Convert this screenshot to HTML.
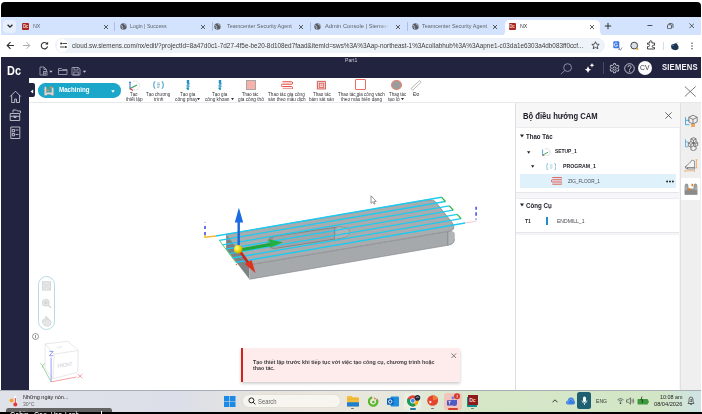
<!DOCTYPE html><html><head><meta charset="utf-8"><style>
*{margin:0;padding:0;box-sizing:border-box}
html,body{width:702px;height:414px;overflow:hidden;background:#fff;font-family:"Liberation Sans",sans-serif;position:relative}
.a{position:absolute}
.T{position:absolute;white-space:nowrap;line-height:1}
#top{left:1px;top:2px;width:699.6px;height:16px;background:#000;border-radius:4px 4px 0 0}
#tabs{left:1px;top:17px;width:699.6px;height:18px;background:#d3e3fd}
#tb{left:1px;top:35px;width:699.6px;height:22px;background:#fff}
#pill{left:55px;top:38.3px;width:550px;height:14.3px;background:#eef2f9;border-radius:8px}
#hdr{left:1.3px;top:56.7px;width:699.3px;height:21.6px;background:#22243f}
#side{left:1.3px;top:56.7px;width:28.1px;height:333px;background:#22243f}
#rib{left:29px;top:78.3px;width:671.6px;height:25.7px;background:#fff;border-bottom:2px solid #e9e9ed}
#vp{left:29px;top:103px;width:486px;height:287px;background:#fff}
#panel{left:515px;top:103px;width:165px;height:287px;background:#f6f6f8;border-left:1px solid #dedee6}
#rail{left:679.6px;top:103px;width:21px;height:287px;background:#efefef;border-left:1px solid #e0e0e0}
#task{left:0;top:390px;width:701px;height:22px;background:linear-gradient(90deg,#e0e2e9 0,#dcdfe9 180px,#e6e4dd 260px,#ebe6df 320px,#e6e8dc 400px,#d6e7c8 480px,#d2e6c6 660px,#cfe3e6 701px);border-top:1px solid #a9adb8}
#bot{left:0;top:412px;width:702px;height:2px;background:#000}
.fav{width:7px;height:7px;background:#a8281f;border-radius:1px;overflow:hidden}
.fav span{position:absolute;left:.6px;top:1.4px;font-size:4.5px;font-weight:bold;color:#f3d3cf;line-height:5px;letter-spacing:-.3px}
.sep{position:absolute;top:22px;width:1px;height:9px;background:#a9bfe6}
</style></head><body>
<div class="a" id="top"></div><div class="a" id="tabs"></div><div class="a" id="tb"></div><div class="a" id="pill"></div><div class="a" id="hdr"></div><div class="a" id="side"></div><div class="a" id="rib"></div><div class="a" id="vp"></div><div class="a" id="panel"></div><div class="a" id="rail"></div><div class="a" id="task"></div><div class="a" id="bot"></div>
<div class="a" style="left:3.3px;top:20px;width:12.5px;height:12.5px;background:#e8effc;border-radius:4px"></div>
<svg class="a" style="left:6px;top:23px" width="8" height="6" viewBox="0 0 8 6"><path d="M1.6 1.8L4 4.2 6.4 1.8" stroke="#222" stroke-width="1.3" fill="none"/></svg>
<div class="a fav" style="left:22.3px;top:22.7px"><span>Dc</span></div>
<div class="T" style="left:33.00px;top:23.12px;font-size:6.00px;font-weight:400;color:#5f6368;transform:scaleX(0.8869);transform-origin:0 0;">NX</div>
<svg class="a" style="left:102.8px;top:23.5px" width="6" height="6" viewBox="0 0 6 6"><path d="M1 1l4 4M5 1L1 5" stroke="#4a4a4a" stroke-width=".9"/></svg>
<div class="sep" style="left:114px"></div>
<svg class="a" style="left:119.6px;top:23px" width="7" height="7" viewBox="0 0 7 7"><circle cx="3.5" cy="3.5" r="3.2" fill="#5a5d63"/><path d="M1 2.3c1.1.1 1.5.9 1.3 1.7-.3.8.4 1.3.7 2.4M4.3 0.5c-.3.8.3 1.3 1 1.2.7 0 1.1.8.9 1.7" stroke="#d3e3fd" stroke-width=".75" fill="none"/></svg>
<div class="T" style="left:130.20px;top:23.12px;font-size:6.00px;font-weight:400;color:#5f6368;transform:scaleX(0.8639);transform-origin:0 0;">Login | Success</div>
<svg class="a" style="left:200.2px;top:23.5px" width="6" height="6" viewBox="0 0 6 6"><path d="M1 1l4 4M5 1L1 5" stroke="#4a4a4a" stroke-width=".9"/></svg>
<div class="sep" style="left:212px"></div>
<svg class="a" style="left:214.3px;top:23px" width="7" height="7" viewBox="0 0 7 7"><circle cx="3.5" cy="3.5" r="3.2" fill="#5a5d63"/><path d="M1 2.3c1.1.1 1.5.9 1.3 1.7-.3.8.4 1.3.7 2.4M4.3 0.5c-.3.8.3 1.3 1 1.2.7 0 1.1.8.9 1.7" stroke="#d3e3fd" stroke-width=".75" fill="none"/></svg>
<div class="T" style="left:227.00px;top:23.12px;font-size:6.00px;font-weight:400;color:#5f6368;transform:scaleX(0.9035);transform-origin:0 0;">Teamcenter Security Agent</div>
<svg class="a" style="left:297.8px;top:23.5px" width="6" height="6" viewBox="0 0 6 6"><path d="M1 1l4 4M5 1L1 5" stroke="#4a4a4a" stroke-width=".9"/></svg>
<div class="sep" style="left:310px"></div>
<svg class="a" style="left:313.8px;top:23px" width="7" height="7" viewBox="0 0 7 7"><circle cx="3.5" cy="3.5" r="3.2" fill="#5a5d63"/><path d="M1 2.3c1.1.1 1.5.9 1.3 1.7-.3.8.4 1.3.7 2.4M4.3 0.5c-.3.8.3 1.3 1 1.2.7 0 1.1.8.9 1.7" stroke="#d3e3fd" stroke-width=".75" fill="none"/></svg>
<div class="a" style="left:325px;top:20px;width:64px;height:12px;overflow:hidden;-webkit-mask-image:linear-gradient(90deg,#000 85%,transparent)"><div class="T" style="left:0.00px;top:3.12px;font-size:6.00px;font-weight:400;color:#5f6368;transform:scaleX(0.9574);transform-origin:0 0;">Admin Console | Siemens</div></div>
<svg class="a" style="left:395px;top:23.5px" width="6" height="6" viewBox="0 0 6 6"><path d="M1 1l4 4M5 1L1 5" stroke="#4a4a4a" stroke-width=".9"/></svg>
<div class="sep" style="left:407px"></div>
<svg class="a" style="left:411.8px;top:23px" width="7" height="7" viewBox="0 0 7 7"><circle cx="3.5" cy="3.5" r="3.2" fill="#5a5d63"/><path d="M1 2.3c1.1.1 1.5.9 1.3 1.7-.3.8.4 1.3.7 2.4M4.3 0.5c-.3.8.3 1.3 1 1.2.7 0 1.1.8.9 1.7" stroke="#d3e3fd" stroke-width=".75" fill="none"/></svg>
<div class="T" style="left:422.00px;top:23.12px;font-size:6.00px;font-weight:400;color:#5f6368;transform:scaleX(0.9063);transform-origin:0 0;">Teamcenter Security Agent</div>
<svg class="a" style="left:492.2px;top:23.5px" width="6" height="6" viewBox="0 0 6 6"><path d="M1 1l4 4M5 1L1 5" stroke="#4a4a4a" stroke-width=".9"/></svg>
<svg class="a" style="left:500px;top:19.5px" width="106" height="16" viewBox="0 0 106 16"><path d="M0 16Q5 16 5 11L5 5Q5 0 10 0L95 0Q100 0 100 5L100 11Q100 16 106 16Z" fill="#fff"/></svg>
<div class="a fav" style="left:508.6px;top:22.8px"><span>Dc</span></div>
<div class="T" style="left:519.70px;top:23.12px;font-size:6.00px;font-weight:400;color:#333;transform:scaleX(0.8749);transform-origin:0 0;">NX</div>
<svg class="a" style="left:588.8px;top:23.5px" width="6" height="6" viewBox="0 0 6 6"><path d="M1 1l4 4M5 1L1 5" stroke="#4a4a4a" stroke-width=".9"/></svg>
<svg class="a" style="left:604px;top:21.8px" width="8" height="8" viewBox="0 0 8 8"><path d="M4 .8v6.4M.8 4h6.4" stroke="#333" stroke-width="1"/></svg>
<svg class="a" style="left:647px;top:24px" width="6" height="3" viewBox="0 0 6 3"><path d="M.4 1.5h5" stroke="#444" stroke-width=".9"/></svg>
<svg class="a" style="left:667px;top:22.8px" width="6.5" height="6.2" viewBox="0 0 6.5 6.2"><rect x=".5" y="1.7" width="4" height="4" rx=".8" stroke="#444" stroke-width=".85" fill="none"/><path d="M1.8.6h2.9q1.3 0 1.3 1.3v2.9" stroke="#444" stroke-width=".85" fill="none"/></svg>
<svg class="a" style="left:688.8px;top:23px" width="5.6" height="5.6" viewBox="0 0 5.6 5.6"><path d="M.4 .4l4.8 4.8M5.2 .4L.4 5.2" stroke="#444" stroke-width=".85"/></svg>
<svg class="a" style="left:6px;top:41px" width="9" height="9" viewBox="0 0 9 9"><path d="M8 4.5H1.5M4.5 1.2 1.2 4.5 4.5 7.8" stroke="#333" stroke-width="1.15" fill="none"/></svg>
<svg class="a" style="left:22px;top:41px" width="9" height="9" viewBox="0 0 9 9"><path d="M1 4.5h6.5M4.5 1.2 7.8 4.5 4.5 7.8" stroke="#aaa" stroke-width="1" fill="none"/></svg>
<svg class="a" style="left:39.5px;top:41px" width="9" height="9" viewBox="0 0 9 9"><path d="M7.3 3.2A3.2 3.2 0 1 0 7.6 5.4" stroke="#333" stroke-width="1.1" fill="none"/><path d="M5.2 3.6h2.9V.7z" fill="#333"/></svg>
<div class="a" style="left:56.8px;top:39px;width:11.6px;height:13px;border-radius:6px;background:#fff"></div>
<svg class="a" style="left:59.5px;top:42.3px" width="7" height="6.5" viewBox="0 0 7 6.5"><path d="M2.5 1.5H7M0 5H4.5" stroke="#333" stroke-width=".9"/><circle cx="1.2" cy="1.5" r="1.1" fill="#333"/><circle cx="5.8" cy="5" r="1.1" fill="#333"/></svg>
<div class="T" style="left:72.10px;top:42.47px;font-size:7.00px;font-weight:400;color:#3c3c3c;transform:scaleX(0.9096);transform-origin:0 0;">cloud.sw.siemens.com/nx/edit/?projectId=8a47d0c1-7d27-4f5e-be20-8d108ed7faad&amp;itemId=sws%3A%3Aap-northeast-1%3Acollabhub%3A%3Aapne1-c03da1e6303a4db083ff0ccf...</div>
<svg class="a" style="left:590.5px;top:41px" width="9" height="9" viewBox="0 0 10 10"><path d="M5 .8l1.2 2.7 2.9.3-2.2 1.9.7 2.9L5 7.1 2.4 8.6l.7-2.9L.9 3.8l2.9-.3z" stroke="#333" stroke-width=".9" fill="none"/></svg>
<svg class="a" style="left:613px;top:41px" width="10" height="10" viewBox="0 0 10 10"><rect x="0.3" y="0.3" width="6" height="7" rx="1" fill="#3b78e7"/><path d="M4.3 2.6A1.7 1.7 0 1 0 4.6 4.2H3.3" stroke="#fff" stroke-width=".8" fill="none"/><path d="M6 6.5l1.5 2.8L9 6.5" stroke="#777" stroke-width=".7" fill="none"/><path d="M5.5 7.3v1.8h1.5" fill="#5a5acd"/></svg>
<svg class="a" style="left:630px;top:40.5px" width="9" height="10" viewBox="0 0 9 10"><circle cx="4.2" cy="4.6" r="3.4" fill="#d8dfe8" stroke="#444" stroke-width="1"/><circle cx="7.3" cy="8" r="1.1" fill="#f0a020"/></svg>
<svg class="a" style="left:646px;top:40px" width="10" height="10" viewBox="0 0 10 10"><path d="M1.5 3h2.2V1.8a1.1 1.1 0 0 1 2.2 0V3h2.6v2.3H7.3a1.1 1.1 0 0 0 0 2.2h1.2V9H1.5V6.5h1a1.1 1.1 0 0 0 0-2.2h-1z" stroke="#333" stroke-width=".9" fill="none"/></svg>
<div class="a" style="left:662.6px;top:41.5px;width:1px;height:8px;background:#d8deea"></div>
<svg class="a" style="left:670px;top:41px" width="10" height="10" viewBox="0 0 10 10"><path d="M1 5.5Q1 3 3.5 3 5 2.5 6.2 2 7.5 3 8.5 5.5 9 8 7 8.8 5.5 9.5 3.5 8.8 1 8 1 5.5z" fill="#1d3550"/><path d="M1.8 5.2Q2.5 4 4 4.2" stroke="#4a90c8" stroke-width=".9" fill="none"/><path d="M6.3 2.4L7.8.8" stroke="#9aa" stroke-width=".6"/></svg>
<svg class="a" style="left:689.7px;top:41.5px" width="4" height="8" viewBox="0 0 4 8"><circle cx="2" cy="1.3" r=".75" fill="#444"/><circle cx="2" cy="4" r=".75" fill="#444"/><circle cx="2" cy="6.7" r=".75" fill="#444"/></svg>
<div class="T" style="left:7.10px;top:64.90px;font-size:12.40px;font-weight:bold;color:#fff;transform:scaleX(0.8836);transform-origin:0 0;">Dc</div>
<svg class="a" style="left:39px;top:66px" width="50" height="10" viewBox="0 0 50 10" fill="none" stroke="#9a9cb0" stroke-width=".9"><path d="M1 1h4l2.5 2.5V9H1z"/><path d="M5 1v2.5h2.5"/><rect x="4.5" y="5.5" width="3.5" height="3.5" fill="#22243f"/><path d="M6.2 6.2v2.1M5.2 7.25h2"/><path d="M10.2 4.8h3.4l-1.7 2z" fill="#c8c9d8" stroke="none"/><path d="M19.5 2.5h3l1 1h4.5v5h-8.5z"/><path d="M19.5 4.5h8.5"/><path d="M33 1.5h6.5l1.5 1.5v6H33z"/><rect x="35" y="1.5" width="4" height="2.5"/><rect x="34.8" y="6" width="4.5" height="3"/><path d="M43.8 4.8h3.4l-1.7 2z" fill="#c8c9d8" stroke="none"/></svg>
<div class="T" style="left:344.90px;top:57.45px;font-size:6.20px;font-weight:400;color:#c9cad6;transform:scaleX(0.8313);transform-origin:0 0;">Part1</div>
<svg class="a" style="left:560px;top:62.5px" width="13" height="12" viewBox="0 0 13 12" fill="none" stroke="#8a8c9e" stroke-width="1"><circle cx="7.6" cy="4.6" r="3.9"/><path d="M4.8 7.4L1 11.2"/></svg>
<svg class="a" style="left:584px;top:63px" width="11" height="10" viewBox="0 0 11 10" fill="#fff"><path d="M4 3.2Q4.5 6 7.2 6.6Q4.5 7.2 4 10Q3.5 7.2 .8 6.6Q3.5 6 4 3.2z"/><path d="M8 0Q8.3 1.9 10.3 2.3Q8.3 2.7 8 4.6Q7.7 2.7 5.7 2.3Q7.7 1.9 8 0z"/></svg>
<div class="a" style="left:603px;top:62px;width:1px;height:12px;background:#4a4c66"></div>
<svg class="a" style="left:608.5px;top:62.8px" width="11" height="11" viewBox="0 0 11 11" fill="none" stroke="#d8d9e2" stroke-width=".85"><path d="M4.6 .6h1.8l.3 1.4 1 .6 1.4-.5.9 1.6-1.1.9v1.2l1.1.9-.9 1.6-1.4-.5-1 .6-.3 1.4H4.6l-.3-1.4-1-.6-1.4.5-.9-1.6 1.1-.9V4.6L1 3.7l.9-1.6 1.4.5 1-.6z"/><circle cx="5.5" cy="5.5" r="1.6"/></svg>
<svg class="a" style="left:623.5px;top:62.8px" width="11" height="11" viewBox="0 0 11 11" fill="none" stroke="#d8d9e2" stroke-width=".85"><circle cx="5.5" cy="5.5" r="4.8"/><path d="M3.9 4.2a1.6 1.6 0 1 1 2.3 1.4c-.5.3-.7.6-.7 1.2"/><circle cx="5.5" cy="8.1" r=".3" fill="#d8d9e2"/></svg>
<div class="a" style="left:637.7px;top:60.6px;width:14.7px;height:14.7px;border-radius:50%;background:#fafafa"></div>
<div class="T" style="left:640.30px;top:64.84px;font-size:6.80px;font-weight:400;color:#3a3c4c;transform:scaleX(0.9944);transform-origin:0 0;">CV</div>
<div class="T" style="left:662.20px;top:63.30px;font-size:8.50px;font-weight:bold;color:#f2f2f6;transform:scaleX(0.9024);transform-origin:0 0;letter-spacing:.2px;">SIEMENS</div>
<svg class="a" style="left:8.5px;top:89.6px" width="13" height="50" viewBox="0 0 13 50" fill="none" stroke="#c6c7d3" stroke-width=".9" stroke-linejoin="round"><path d="M1.2 6.5L6.5 1.2 11.8 6.5M2.7 5v7.5h3V9h1.8v3.5h3V5"/><path d="M4 22.5v-2.5h3.5l1 1h3v2M1.2 23.5h9.5v7H1.2zM1.2 26.3h9.5M5 25.5v2h2v-2"/><path d="M1.8 37h9v11.5h-9zM3.3 39.5h2.2v2.3h-2.2zM6.5 40h3M3.3 43.5h2.2v2.3h-2.2zM6.5 44.5h3"/></svg>
<div class="a" style="left:28.5px;top:83.4px;width:6.4px;height:13.8px;background:#22243f;border-radius:0 2px 2px 0"></div>
<svg class="a" style="left:29.5px;top:88.5px" width="4" height="5" viewBox="0 0 4 5"><path d="M3.2 .4v4.2L.6 2.5z" fill="#fff"/></svg>
<div class="a" style="left:37.7px;top:83.4px;width:83.2px;height:14.6px;background:#1ba7c9;border-radius:7.3px"></div>
<svg class="a" style="left:43.5px;top:85.8px" width="10" height="10" viewBox="0 0 10 10"><path d="M.3 9.5V2.2Q.3.5 1.4.5 2.5.5 2.5 2.2V6.6Q5 5.8 7.5 6.6V3Q7.5 1.2 8.5 1.2 9.7 1.2 9.7 3V9.5H7.8Q7 8.3 5 8.3 3 8.3 2.2 9.5z" fill="#e2dcdc" stroke="#8a8a8a" stroke-width=".4"/><path d="M1 3v5.5M9 3.5v5" stroke="#b8b2b2" stroke-width=".5"/><rect x="5.6" y=".6" width="2" height="1.9" fill="#e8902a"/><rect x="2.8" y="3.5" width="2.5" height="1.7" fill="#e8902a"/></svg>
<div class="T" style="left:59.00px;top:87.26px;font-size:6.90px;font-weight:bold;color:#fff;transform:scaleX(0.8950);transform-origin:0 0;">Machining</div>
<svg class="a" style="left:111px;top:89.6px" width="4" height="3" viewBox="0 0 4 3"><path d="M.2 .3h3.6L2 2.7z" fill="#fff"/></svg>
<svg class="a" style="left:683.5px;top:85.5px" width="12.5" height="11" viewBox="0 0 12.5 11"><path d="M.8 .5l10.9 10M11.7 .5L.8 10.5" stroke="#6a6a70" stroke-width=".9"/></svg>
<div class="T" style="left:130.45px;top:91.97px;font-size:5.00px;font-weight:400;color:#333338;transform:scaleX(0.8696);transform-origin:0 0;">Tạo</div>
<div class="T" style="left:125.95px;top:96.87px;font-size:5.00px;font-weight:400;color:#333338;transform:scaleX(0.9420);transform-origin:0 0;">thiết lập</div>
<div class="T" style="left:146.35px;top:91.97px;font-size:5.00px;font-weight:400;color:#333338;transform:scaleX(0.8841);transform-origin:0 0;">Tạo chương</div>
<div class="T" style="left:153.80px;top:96.87px;font-size:5.00px;font-weight:400;color:#333338;transform:scaleX(0.9385);transform-origin:0 0;">trình</div>
<div class="T" style="left:180.20px;top:91.97px;font-size:5.00px;font-weight:400;color:#333338;transform:scaleX(0.9109);transform-origin:0 0;">Tạo gia</div>
<div class="T" style="left:174.55px;top:96.87px;font-size:5.00px;font-weight:400;color:#333338;transform:scaleX(0.9663);transform-origin:0 0;">công phay</div>
<div class="T" style="left:211.90px;top:91.97px;font-size:5.00px;font-weight:400;color:#333338;transform:scaleX(0.9109);transform-origin:0 0;">Tạo gia</div>
<div class="T" style="left:205.05px;top:96.87px;font-size:5.00px;font-weight:400;color:#333338;transform:scaleX(0.9474);transform-origin:0 0;">công khoan</div>
<div class="T" style="left:242.45px;top:91.97px;font-size:5.00px;font-weight:400;color:#333338;transform:scaleX(0.8475);transform-origin:0 0;">Thao tác</div>
<div class="T" style="left:237.80px;top:96.87px;font-size:5.00px;font-weight:400;color:#333338;transform:scaleX(0.9468);transform-origin:0 0;">gia công thô</div>
<div class="T" style="left:268.25px;top:91.97px;font-size:5.00px;font-weight:400;color:#333338;transform:scaleX(0.9233);transform-origin:0 0;">Thao tác gia công</div>
<div class="T" style="left:267.80px;top:96.87px;font-size:5.00px;font-weight:400;color:#333338;transform:scaleX(0.9202);transform-origin:0 0;">sàn theo mẫu dịch</div>
<div class="T" style="left:312.65px;top:91.97px;font-size:5.00px;font-weight:400;color:#333338;transform:scaleX(0.9091);transform-origin:0 0;">Thao tác</div>
<div class="T" style="left:308.95px;top:96.87px;font-size:5.00px;font-weight:400;color:#333338;transform:scaleX(0.9211);transform-origin:0 0;">bám sát sàn</div>
<div class="T" style="left:337.65px;top:91.97px;font-size:5.00px;font-weight:400;color:#333338;transform:scaleX(0.9032);transform-origin:0 0;">Thao tác gia công vách</div>
<div class="T" style="left:340.50px;top:96.87px;font-size:5.00px;font-weight:400;color:#333338;transform:scaleX(0.9275);transform-origin:0 0;">theo mẫu biên dạng</div>
<div class="T" style="left:388.55px;top:91.97px;font-size:5.00px;font-weight:400;color:#333338;transform:scaleX(0.8886);transform-origin:0 0;">Thao tác</div>
<div class="T" style="left:387.85px;top:96.87px;font-size:5.00px;font-weight:400;color:#333338;transform:scaleX(0.9400);transform-origin:0 0;">tạo lỗ</div>
<div class="T" style="left:412.50px;top:91.97px;font-size:5.00px;font-weight:400;color:#333338;transform:scaleX(0.9990);transform-origin:0 0;">Đo</div>
<svg class="a" style="left:197.3px;top:98.3px" width="3" height="2.5" viewBox="0 0 3 2.5"><path d="M0 0h3L1.5 2.2z" fill="#333"/></svg>
<svg class="a" style="left:230.6px;top:98.3px" width="3" height="2.5" viewBox="0 0 3 2.5"><path d="M0 0h3L1.5 2.2z" fill="#333"/></svg>
<svg class="a" style="left:401.2px;top:98.3px" width="3" height="2.5" viewBox="0 0 3 2.5"><path d="M0 0h3L1.5 2.2z" fill="#333"/></svg>
<svg class="a" style="left:128px;top:79.5px" width="12" height="11" viewBox="0 0 12 11"><path d="M5 1.5a4.5 4.5 0 1 1 0 8" stroke="#b8b8b8" stroke-width=".6" fill="none" stroke-dasharray="1 .6"/><path d="M2 9.5V2" stroke="#2b6fcc" stroke-width="1"/><path d="M1 3L2 1 3 3z" fill="#2b6fcc"/><path d="M2 8.5L9 5" stroke="#3aa655" stroke-width="1.1"/><path d="M2 8.5l3 2" stroke="#d9433a" stroke-width="1.1"/></svg>
<svg class="a" style="left:152.5px;top:80.8px" width="11" height="8" viewBox="0 0 11 8" fill="none" stroke="#2a9cc4" stroke-width="1"><path d="M2.3 .5Q1 .5 1 2v1.2L.3 4l.7.8V6Q1 7.5 2.3 7.5M8.7 .5Q10 .5 10 2v1.2l.7.8-.7.8V6Q10 7.5 8.7 7.5"/><path d="M4 2h3M4 3.5h3M4 5h3M4 6.5h2.2" stroke="#7aa5bb" stroke-width=".7"/></svg>
<svg class="a" style="left:185.8px;top:80.2px" width="4" height="10" viewBox="0 0 4 10"><rect x=".8" y="0" width="2.4" height="3" fill="#1f8fc7"/><path d="M.8 3.2h2.4v1.2L.8 5.4v1.2l2.4-1v1.2L.8 7.8v1.2L2 10l1.2-1" fill="#1f8fc7" stroke="#1f8fc7" stroke-width=".5"/></svg>
<svg class="a" style="left:217.6px;top:80.2px" width="4" height="10" viewBox="0 0 4 10"><rect x=".8" y="0" width="2.4" height="3" fill="#1f8fc7"/><path d="M.8 3.2h2.4v1.2L.8 5.4v1.2l2.4-1v1.2L.8 7.8v1.2L2 10l1.2-1" fill="#1f8fc7" stroke="#1f8fc7" stroke-width=".5"/></svg>
<div class="a" style="left:245.5px;top:79.8px;width:10.5px;height:10.2px;background:#f6b1ab;border:.7px solid #a7a7a7"></div>
<svg class="a" style="left:280.5px;top:80.8px" width="12" height="8" viewBox="0 0 12 8" fill="none" stroke="#e0443a" stroke-width="1"><path d="M1.5 .8h9a1.2 1.2 0 0 1 0 2.4h-9a1.2 1.2 0 0 0 0 2.4h9a1.2 1.2 0 0 1 0 2.4h-9"/></svg>
<div class="a" style="left:315.6px;top:80px;width:10.8px;height:10.2px;background:#ececec"></div>
<svg class="a" style="left:316.6px;top:81px" width="9" height="8.5" viewBox="0 0 9 8.5" fill="none" stroke="#e0443a" stroke-width=".8"><rect x=".6" y=".6" width="7.8" height="7.3"/><rect x="2.2" y="2.2" width="4.6" height="4.1"/><path d="M3.5 4.2h2"/></svg>
<div class="a" style="left:355.2px;top:79.2px;width:10.6px;height:10.6px;background:#fff;border:1.3px solid #ef6c60;border-radius:1px"></div>
<div class="a" style="left:391px;top:79.6px;width:11px;height:10.5px;background:#9c9c9c;border:1.2px solid #f08070;border-radius:50%"></div>
<svg class="a" style="left:410px;top:79.5px" width="12" height="11" viewBox="0 0 12 11"><path d="M1 8.6L9.6.6l1.6 1.6L2.6 10.2z" fill="#fff" stroke="#9a9a9a" stroke-width=".7"/></svg>
<div class="a" style="left:516px;top:103px;width:164px;height:24.5px;background:#f7f7f8;border-bottom:1px solid #ececf0"></div>
<div class="T" style="left:523.30px;top:112.27px;font-size:8.90px;font-weight:bold;color:#1c1c26;transform:scaleX(0.8617);transform-origin:0 0;">Bộ điều hướng CAM</div>
<svg class="a" style="left:665px;top:112px" width="7" height="7" viewBox="0 0 7 7"><path d="M.4 .4l6.2 6.2M6.6 .4L.4 6.6" stroke="#505058" stroke-width=".85"/></svg>
<div class="a" style="left:516px;top:128px;width:163px;height:65px;background:#fff;border-bottom:1px solid #e6e6ea"></div>
<svg class="a" style="left:519.5px;top:134px" width="4" height="4" viewBox="0 0 4 4"><path d="M0 .6h4L2 3.6z" fill="#222"/></svg>
<div class="T" style="left:526.40px;top:132.51px;font-size:7.20px;font-weight:bold;color:#22222c;transform:scaleX(0.8428);transform-origin:0 0;">Thao Tác</div>
<svg class="a" style="left:526.5px;top:150.5px" width="4" height="3" viewBox="0 0 4 3"><path d="M0 .3h3.4L1.7 2.7z" fill="#222"/></svg>
<svg class="a" style="left:540.5px;top:147.5px" width="10" height="8.5" viewBox="0 0 10 8.5"><path d="M4 1a3.7 3.7 0 1 1 0 6.8" stroke="#9a9a9a" stroke-width=".5" fill="none" stroke-dasharray=".9 .5"/><path d="M1.6 7.6V1.5" stroke="#2b8fd6" stroke-width=".8"/><path d="M1.6 7.2l5.5-3" stroke="#3aa655" stroke-width=".9"/><path d="M1.6 7.2l2.3 1.2" stroke="#d9433a" stroke-width=".9"/></svg>
<div class="T" style="left:555.40px;top:149.23px;font-size:5.40px;font-weight:bold;color:#22222c;transform:scaleX(0.9095);transform-origin:0 0;">SETUP_1</div>
<svg class="a" style="left:531px;top:165px" width="4" height="3" viewBox="0 0 4 3"><path d="M0 .3h3.4L1.7 2.7z" fill="#222"/></svg>
<svg class="a" style="left:545.8px;top:162.8px" width="10.5" height="7.5" viewBox="0 0 10.5 7.5" fill="none" stroke="#3ea8c8" stroke-width=".7"><path d="M2.2 .4Q1 .4 1 1.8v1.1L.3 3.7l.7.8v1.2Q1 7.1 2.2 7.1M8.3 .4Q9.5 .4 9.5 1.8v1.1l.7.8-.7.8v1.2Q9.5 7.1 8.3 7.1"/><path d="M3.8 1.8h2.8M3.8 3h2.8M3.8 4.2h2.8M3.8 5.4h2" stroke="#9ab9c8" stroke-width=".5"/></svg>
<div class="T" style="left:562.70px;top:163.93px;font-size:5.40px;font-weight:bold;color:#22222c;transform:scaleX(0.9603);transform-origin:0 0;">PROGRAM_1</div>
<div class="a" style="left:520px;top:173.9px;width:155.5px;height:14px;background:#dff1fa"></div>
<svg class="a" style="left:550.6px;top:176.8px" width="11.5" height="8.2" viewBox="0 0 11.5 8.2" fill="none" stroke="#e0443a" stroke-width=".85"><path d="M1.3 .6h9a1.1 1.1 0 0 1 0 2.2h-9a1.1 1.1 0 0 0 0 2.2h9a1.1 1.1 0 0 1 0 2.2h-9"/></svg>
<div class="T" style="left:567.50px;top:179.23px;font-size:5.40px;font-weight:400;color:#48484f;transform:scaleX(0.8725);transform-origin:0 0;">ZIG_FLOOR_1</div>
<svg class="a" style="left:665.5px;top:180px" width="8" height="3" viewBox="0 0 8 3" fill="#222"><circle cx="1.1" cy="1.5" r=".95"/><circle cx="4" cy="1.5" r=".95"/><circle cx="6.9" cy="1.5" r=".95"/></svg>
<div class="a" style="left:516px;top:197.5px;width:163px;height:35.5px;background:#fff;border-top:1px solid #ececf0;border-bottom:1px solid #e6e6ea"></div>
<svg class="a" style="left:520px;top:203.3px" width="4" height="4" viewBox="0 0 4 4"><path d="M0 .6h4L2 3.6z" fill="#222"/></svg>
<div class="T" style="left:526.20px;top:201.61px;font-size:7.20px;font-weight:bold;color:#22222c;transform:scaleX(0.8613);transform-origin:0 0;">Công Cụ</div>
<div class="T" style="left:524.50px;top:219.03px;font-size:5.40px;font-weight:bold;color:#22222c;transform:scaleX(0.9211);transform-origin:0 0;">T1</div>
<div class="a" style="left:545.8px;top:216.8px;width:2px;height:8.7px;background:#1f8fc7"></div>
<div class="T" style="left:556.70px;top:219.03px;font-size:5.40px;font-weight:400;color:#48484f;transform:scaleX(0.9362);transform-origin:0 0;">ENDMILL_1</div>
<div class="a" style="left:516px;top:234px;width:163px;height:156px;background:#fff;border-top:1px solid #f3f3f5"></div>
<div class="a" style="left:680.5px;top:178px;width:19.5px;height:22px;background:#fff"></div>
<svg class="a" style="left:684px;top:113.5px" width="16" height="15" viewBox="0 0 16 15" fill="none" stroke-width=".8"><path d="M1.5 3.2v7.5h4M1.5 6.3h3.8" stroke="#2b9bd8"/><path d="M9 1.2l4.2 2.1v4.6L9 10 4.8 7.9V3.3zM4.8 3.3L9 5.4l4.2-2.1M9 5.4V10" stroke="#666"/></svg>
<div class="a" style="left:690.8px;top:124.2px;width:4.6px;height:2.9px;background:#f0a860"></div>
<svg class="a" style="left:684px;top:136.5px" width="15" height="14" viewBox="0 0 15 14" fill="none" stroke-width=".7"><path d="M1.5 2.2v7.6h3M1.5 5h3" stroke="#2b9bd8"/><path d="M9.5 .6l2.6 1.3v2.8L9.5 6 6.9 4.7V1.9zM6.9 1.9l2.6 1.3 2.6-1.3M9.5 3.2V6" stroke="#555"/><path d="M6.9 4.7L4.3 6v2.8l2.6 1.3 2.6-1.3V6M4.3 6l2.6 1.3L9.5 6M6.9 7.3v2.8" stroke="#555"/><path d="M12.1 4.7l1.6.9v2.8l-2.6 1.3-1.6-.8M9.5 6l1.6.9 2.6-1.3M11.1 6.9v2.8" stroke="#555"/><path d="M6.9 10.1v2.6l2.6 1 2.6-1.3V9.7" stroke="#555"/></svg>
<svg class="a" style="left:683.5px;top:159px" width="15" height="13" viewBox="0 0 15 13" fill="none"><path d="M1.5 7.5L5.5 4.2 8.2 1l2.4 1.2v6.3H3.5z" fill="#f4f4f4" stroke="#666" stroke-width=".7"/><path d="M1.5 7.5v1.5l2 1h7.1V8.5M3.5 8.5V10" stroke="#666" stroke-width=".7"/><path d="M12.5 .8v8M11.4 .8h2.2M11.4 8.8h2.2M1 11.8h9.5M1 10.8v2M10.5 10.8v2" stroke="#f0a050" stroke-width=".7"/></svg>
<svg class="a" style="left:683.5px;top:181.5px" width="14" height="13.5" viewBox="0 0 14 13.5"><path d="M.6 13V4.5Q.6 1.5 2.8 1.5 4.5 1.5 4.5 4v2.5h5V4q0-2.5 1.7-2.5 2.2 0 2.2 3V13z" fill="#9a9a9a"/><path d="M.6 9h12.8M.6 11h12.8" stroke="#6a6a6a" stroke-width=".6"/><path d="M2 4.5v4M12 4.5v4" stroke="#c8c8c8" stroke-width=".6"/><rect x="4" y="6.4" width="2.5" height="2" fill="#e67c1f"/><rect x="7.5" y="1.8" width="1.6" height="2.4" fill="#e67c1f"/></svg>
<div class="a" style="left:38.2px;top:276px;width:17.2px;height:54px;border:.8px solid #b4dbe4;border-radius:8.6px"></div>
<svg class="a" style="left:41px;top:281px" width="11" height="46" viewBox="0 0 11 46" fill="#e6e6e8" stroke="#cdcdd2" stroke-width=".7"><rect x="1.3" y=".7" width="8.4" height="8.4"/><path d="M2.5 1.9l6 6M8.5 1.9l-6 6" stroke="#d8d8dc" fill="none"/><circle cx="4.8" cy="21.7" r="3.5"/><path d="M7.3 24.2l2.6 2.6" stroke-width="1.1"/><circle cx="4.8" cy="21.7" r="1.6" fill="#d5d5d9" stroke="none"/><path d="M3.5 44.5Q1 42 1.4 39.2l1.3-1.1 1.5 1.6V36.6a1 1 0 0 1 2 0V38.5a1 1 0 0 1 2 .3v.9a1 1 0 0 1 1.7.6V42q0 2.6-2.4 3.2z"/></svg>
<svg class="a" style="left:31.8px;top:333px" width="7" height="7" viewBox="0 0 7 7" fill="none" stroke="#6a6a70" stroke-width=".7"><circle cx="3.5" cy="3.5" r="3"/><path d="M3.5 2v3.2"/></svg>
<svg class="a" style="left:30px;top:336px" width="60" height="50" viewBox="30 336 60 50" fill="none"><path d="M45.1 343.9L68 341.4 78.3 350.5 54.1 354.1z M54.1 354.1L52.9 378.9 77.7 372.2 78.3 350.5 M45.1 343.9V368.6L52.9 378.9" stroke="#d9d9de" stroke-width=".6"/><text x="57.7" y="368" font-family="Liberation Sans" font-size="5.2" fill="#cfcfd5" transform="rotate(-10 57.7 368)" textLength="15.5">FRONT</text><text x="56.5" y="348.8" font-family="Liberation Sans" font-size="3" fill="#d5d5da" transform="rotate(-6 56.5 348.8)">TOP</text><path d="M51.1 381.9V357.7" stroke="#7a88f0" stroke-width=".8"/><path d="M51.1 381.9L76.5 377" stroke="#f08888" stroke-width=".8"/><path d="M51.1 381.9L42.6 366.2" stroke="#88cc88" stroke-width=".8"/><path d="M49.4 351.4h3.8l-3.8 4.3h3.8" stroke="#7a88f0" stroke-width=".8"/><path d="M77.8 374.1l4.5 4.1M82.3 374.1l-4.5 4.1" stroke="#f08888" stroke-width=".8"/><path d="M40.3 363.3l2.4 2.4 2.4-2.4M42.7 365.7v1.8" stroke="#88cc88" stroke-width=".8"/></svg>
<svg class="a" style="left:369.5px;top:194.5px" width="8" height="10" viewBox="0 0 8 10"><path d="M1 .8v7.6l1.8-1.6 1.3 2.4 1-.5-1.2-2.3h2.4z" fill="#fff" stroke="#555" stroke-width=".6"/></svg>
<svg class="a" style="left:0;top:0" width="702" height="414" viewBox="0 0 702 414"><defs><linearGradient id="ff" x1="0" y1="0" x2="1" y2="0"><stop offset="0" stop-color="#acafb1"/><stop offset="1" stop-color="#b8bbbd"/></linearGradient><radialGradient id="sph" cx=".35" cy=".35" r=".7"><stop offset="0" stop-color="#fffb9a"/><stop offset=".5" stop-color="#f1de10"/><stop offset="1" stop-color="#b8a000"/></radialGradient></defs><polygon points="226.10,234.40 249.40,264.80 249.40,279.30 226.10,248.90" fill="#7f8285"/><path d="M249.4 264.8 L447.8 231.5 Q454.5 230.5 454.5 234 L454.5 239.5 Q454 244.5 447.8 245.3 L249.4 279.3Z" fill="#a6a9ac"/><path d="M447.8 231.6 Q454.5 230.5 454.5 234 L454.5 239.5 Q454 244.5 447.8 245.3Z" fill="#b2b5b7"/><path d="M447.8 231.8V245.2" stroke="#6f7275" stroke-width=".6"/><path d="M249.4 279.3 L447.8 245.3 Q454 244.5 454.5 239.5" stroke="#7d8083" stroke-width=".6" fill="none"/><path d="M226.1 234.4 L426.2 199.9 Q434 199 436.4 202.8 L452.5 223 Q456.8 230.8 447.8 231.5 L249.4 264.8Z" fill="#a9acae" stroke="#6f7275" stroke-width=".55"/><path d="M273.5 236.4 L336.9 227.1 Q349.7 226.5 349.7 232.8 Q349 237.5 334 239.2 L274.2 248.5 Q267.8 248 267.8 242 Q268.5 237 273.5 236.4Z" fill="#a2a5a8" stroke="#6a6d70" stroke-width=".6"/><path d="M336.9 227.3 Q349.7 226.5 349.7 232.8 Q349 237.5 334.4 239 Z" fill="#b0b3b6"/><path d="M334.4 227.6V239" stroke="#6a6d70" stroke-width=".6"/><path d="M274 236.6 Q268 238 268 242.5 Q269 246.5 272 247 Q271 241 274 236.6z" fill="#8e9194"/><path d="M216.00 236.00 L441.50 197.21" stroke="#1ccbf0" stroke-width="1.35"/><path d="M219.32 240.40 L445.43 201.51" stroke="#1ccbf0" stroke-width="1.35"/><path d="M222.64 244.80 L449.36 205.80" stroke="#1ccbf0" stroke-width="1.35"/><path d="M225.96 249.20 L453.29 210.10" stroke="#1ccbf0" stroke-width="1.35"/><path d="M229.28 253.60 L457.22 214.39" stroke="#1ccbf0" stroke-width="1.35"/><path d="M232.60 258.00 L461.15 218.69" stroke="#1ccbf0" stroke-width="1.35"/><path d="M235.92 262.40 L465.08 222.98" stroke="#1ccbf0" stroke-width="1.35"/><path d="M441.50 197.21 L445.43 201.51" stroke="#22bb22" stroke-width="1.2"/><path d="M449.36 205.80 L453.29 210.10" stroke="#22bb22" stroke-width="1.2"/><path d="M457.22 214.39 L461.15 218.69" stroke="#22bb22" stroke-width="1.2"/><path d="M219.32 240.40 L235.92 262.40" stroke="#44c044" stroke-width=".8"/><path d="M205 234.8 V237.3 L216 236" stroke="#f5b830" stroke-width="1.4" fill="none"/><path d="M205 225.9V229.1M205 232V234.9" stroke="#3a44e8" stroke-width="1.5"/><path d="M205 221.8V223" stroke="#a0a6f0" stroke-width="1"/><path d="M465.08 222.98 L476 221.4" stroke="#f4b8c4" stroke-width=".8"/><path d="M476.1 206.8V209.8M476.1 212.3V215.7" stroke="#3a44e8" stroke-width="1.5"/><path d="M476.1 218.2V220.2" stroke="#8890f0" stroke-width="1.3"/><path d="M236 264 l1 1.2" stroke="#e08020" stroke-width="1.2"/><path d="M238.7 246 V221" stroke="#1a64d8" stroke-width="2.4"/><path d="M238.9 207.7 L243.2 222.4 L234.8 222.4Z" fill="#1a6ce0"/><path d="M241 249.8 L270 244.6" stroke="#1fa53a" stroke-width="3.2"/><path d="M283 242.2 L269 239.6 L270.4 247.4Z" fill="#22b040"/><path d="M240.5 252 L248 262.5" stroke="#c8261e" stroke-width="2.6"/><path d="M255.5 273 L244.8 264 L251.5 260Z" fill="#e0301e"/><circle cx="238.2" cy="249.3" r="4.3" fill="url(#sph)"/></svg>
<div class="a" style="left:241.2px;top:347.6px;width:218.5px;height:34px;background:#fdeceb;border-left:2px solid #d2221b;box-shadow:0 1.5px 3px rgba(0,0,0,.22)"></div>
<div class="T" style="left:252.60px;top:358.65px;font-size:6.20px;font-weight:bold;color:#3c3a3c;transform:scaleX(0.8662);transform-origin:0 0;">Tạo thiết lập trước khi tiếp tục với việc tạo công cụ, chương trình hoặc</div>
<div class="T" style="left:252.60px;top:365.35px;font-size:6.20px;font-weight:bold;color:#3c3a3c;transform:scaleX(0.8565);transform-origin:0 0;">thao tác.</div>
<svg class="a" style="left:451.2px;top:352.8px" width="5.5" height="5.5" viewBox="0 0 5.5 5.5"><path d="M.4 .4l4.7 4.7M5.1 .4L.4 5.1" stroke="#555" stroke-width=".75"/></svg>
<svg class="a" style="left:9px;top:394px" width="10" height="14" viewBox="0 0 10 14"><circle cx="2.6" cy="6.5" r="2" fill="#f5a030"/><rect x="5" y="1.5" width="2.6" height="9" rx="1.3" fill="#fff" stroke="#d9dbe8" stroke-width=".4"/><circle cx="6.3" cy="10.5" r="2" fill="#e23a3a"/><rect x="5.8" y="4" width="1" height="6" fill="#e23a3a"/></svg>
<div class="T" style="left:23.30px;top:394.25px;font-size:6.20px;font-weight:400;color:#222;transform:scaleX(0.8873);transform-origin:0 0;">Những ngày nón...</div>
<div class="T" style="left:23.30px;top:402.06px;font-size:5.60px;font-weight:400;color:#666;transform:scaleX(0.9200);transform-origin:0 0;">30°C</div>
<div class="a" style="left:6px;top:407.6px;width:106px;height:6.4px;background:#646464;border-radius:2.5px 2.5px 0 0"></div>
<div class="a" style="left:0;top:411.8px;width:702px;height:2.2px;background:#000"></div>
<div class="T" style="left:10.00px;top:410.46px;font-size:9.50px;font-weight:400;color:#fff;transform:scaleX(0.7532);transform-origin:0 0;">Cabin</div>
<div class="T" style="left:34.00px;top:410.46px;font-size:9.50px;font-weight:400;color:#fff;transform:scaleX(0.7455);transform-origin:0 0;">Cao</div>
<div class="T" style="left:51.00px;top:410.46px;font-size:9.50px;font-weight:400;color:#fff;transform:scaleX(0.6789);transform-origin:0 0;">Van</div>
<div class="T" style="left:64.80px;top:410.46px;font-size:9.50px;font-weight:400;color:#fff;transform:scaleX(0.6622);transform-origin:0 0;">Lanh</div>
<div class="a" style="left:101.2px;top:410.5px;width:.8px;height:3.5px;background:#fff"></div>
<svg class="a" style="left:224px;top:396px" width="11.5" height="11" viewBox="0 0 11.5 11"><path d="M0 0h5.4v5.2H0zM6 0h5.5v5.2H6zM0 5.8h5.4V11H0zM6 5.8h5.5V11H6z" fill="#1a8ae6"/></svg>
<div class="a" style="left:242px;top:394px;width:98.7px;height:13.5px;background:#f7f5ef;border-radius:7px;border:.5px solid #e3e0d6"></div>
<svg class="a" style="left:247.5px;top:397px" width="8" height="8" viewBox="0 0 8 8" fill="none" stroke="#222" stroke-width="1"><circle cx="3.4" cy="3.4" r="2.5"/><path d="M5.2 5.2L7.4 7.4"/></svg>
<div class="T" style="left:258.20px;top:398.67px;font-size:6.30px;font-weight:400;color:#666;transform:scaleX(0.9272);transform-origin:0 0;">Search</div>
<svg class="a" style="left:346.5px;top:396px" width="12" height="10.5" viewBox="0 0 12 10.5"><path d="M0 1q0-1 1-1h3.5l1.2 1.2H11q1 0 1 1V10q0 .5-.5.5H.5Q0 10.5 0 10z" fill="#f3bf3a"/><rect x="0" y="6.3" width="12" height="4.2" rx=".5" fill="#1f7fd4"/><path d="M0 3h12" stroke="#e3a520" stroke-width=".6"/></svg>
<div class="a" style="left:351px;top:408.2px;width:3px;height:1.2px;background:#777;border-radius:1px"></div>
<svg class="a" style="left:367.5px;top:395.5px" width="11" height="11" viewBox="0 0 11 11"><path d="M8.8 3.5A4.2 4.2 0 1 1 4.2 1.4" stroke="#5ab82a" stroke-width="2.2" fill="none"/><circle cx="5.4" cy="6" r="1.3" fill="#5ab82a"/><path d="M6.3 1.5l.6 1.6M8.2 2l-.8 1.3M9.6 3.6l-1.2.6" stroke="#e04a3a" stroke-width=".8"/></svg>
<svg class="a" style="left:386.5px;top:395.5px" width="12" height="11" viewBox="0 0 12 11"><rect x="3.5" y="0.5" width="8.5" height="10" rx="1" fill="#1c8ee0"/><rect x="0" y="2.3" width="6.5" height="6.5" rx=".8" fill="#0a5fb8"/><circle cx="3.25" cy="5.55" r="1.7" fill="none" stroke="#fff" stroke-width=".9"/></svg>
<div class="a" style="left:403.8px;top:392.5px;width:17.4px;height:17.3px;background:#e9efe2;border-radius:3px"></div>
<svg class="a" style="left:407px;top:395px" width="14" height="12" viewBox="0 0 14 12"><circle cx="5.8" cy="5.8" r="5.6" fill="#db4437"/><path d="M5.8 5.8L.8 8.6A5.6 5.6 0 0 1 .6 3.6z M5.8 5.8L.8 8.6A5.6 5.6 0 0 0 8.6 10.7z" fill="#0f9d58"/><path d="M5.8 5.8L8.6 10.7A5.6 5.6 0 0 0 11.4 5.6 L5.8 5.8z" fill="#f4b400"/><circle cx="5.8" cy="5.8" r="2.6" fill="#fff"/><circle cx="5.8" cy="5.8" r="2" fill="#4285f4"/><circle cx="10.5" cy="2.8" r="2.8" fill="#1e2a3a"/><path d="M9 2.5q1.5-1 3 0" stroke="#eee" stroke-width=".6" fill="none"/></svg>
<div class="a" style="left:409.6px;top:408.3px;width:6.6px;height:1.4px;background:#257ba0;border-radius:1px"></div>
<svg class="a" style="left:426.5px;top:395.3px" width="11.5" height="11" viewBox="0 0 11.5 11"><path d="M5.7 .3Q9.5 .3 11 4 11.6 7.5 9 9.7 6.5 11.4 3.5 10.4 .3 9 .2 5.5 .5 1.5 4.5.4z" fill="#e3452f"/><path d="M5.7 .3Q9.5.3 11 4L6 5.5z" fill="#f07a3a"/><path d="M2.5 5.5l2.5 1.5-2.5 1.5z" fill="#fff"/></svg>
<div class="a" style="left:430.5px;top:408.2px;width:3px;height:1.2px;background:#777;border-radius:1px"></div>
<div class="a" style="left:444.2px;top:392.5px;width:17.6px;height:17.3px;background:#f1c4bc;border-radius:3px"></div>
<svg class="a" style="left:446px;top:393px" width="15" height="14" viewBox="0 0 15 14"><circle cx="7" cy="4.8" r="1.6" fill="#7b83eb"/><path d="M5.5 7h5.5v3.5q0 2.5-2.7 2.5T5.5 10.5z" fill="#5059c9"/><rect x="1" y="7.2" width="5.2" height="5.2" rx=".6" fill="#4b53bc"/><path d="M2.4 8.6h2.4M3.6 8.6v2.6" stroke="#fff" stroke-width=".7"/><circle cx="11" cy="3.3" r="3" fill="#d03a2a"/><path d="M11.2 1.8v3" stroke="#fff" stroke-width=".7"/></svg>
<div class="a" style="left:448px;top:408.3px;width:9.7px;height:1.4px;background:#d0402c;border-radius:1px"></div>
<div class="a" style="left:467px;top:397px;width:9.5px;height:10px;background:#128d8d"></div>
<div class="a" style="left:468px;top:395px;width:10.2px;height:10.3px;background:#8c1b1b"><span style="position:absolute;left:1.2px;top:2.8px;font-size:5.2px;font-weight:bold;color:#f0d0d0;line-height:5px;letter-spacing:-.3px">Dc</span></div>
<div class="a" style="left:471px;top:408.2px;width:3px;height:1.2px;background:#777;border-radius:1px"></div>
<svg class="a" style="left:552px;top:399px" width="6" height="4" viewBox="0 0 6 4"><path d="M.5 3.3L3 .8l2.5 2.5" stroke="#222" stroke-width=".9" fill="none"/></svg>
<svg class="a" style="left:565.5px;top:396.5px" width="9" height="8" viewBox="0 0 9 8"><path d="M2 7.5Q0 7.5 0 5.5 0 3.8 1.8 3.5 2.2 .5 5 .5 7.8.5 8 3.2 9 4 9 5.5 9 7.5 7 7.5z" fill="#3a7de0"/><path d="M2.5 6.5Q1.5 6.5 1.5 5.3 1.5 4.3 2.7 4.3 3.2 2 5 2 7 2 7 4.5" stroke="#7fb2f5" stroke-width=".7" fill="none"/></svg>
<div class="a" style="left:577.3px;top:391.9px;width:14px;height:17.6px;background:#1f5f72;border-radius:2.5px"></div>
<svg class="a" style="left:581px;top:395.5px" width="7" height="10" viewBox="0 0 7 10"><rect x="2" y=".5" width="3" height="5.5" rx="1.5" fill="#fff"/><path d="M1 4.5q0 2.5 2.5 2.5T6 4.5M3.5 7v2" stroke="#fff" stroke-width=".7" fill="none"/></svg>
<div class="T" style="left:596.00px;top:398.56px;font-size:5.60px;font-weight:400;color:#333;transform:scaleX(0.9072);transform-origin:0 0;">ENG</div>
<svg class="a" style="left:616.5px;top:397px" width="7" height="7" viewBox="0 0 7 7" fill="none" stroke="#333" stroke-width=".6"><path d="M.5 2.8Q3.5 0 6.5 2.8M1.6 4Q3.5 2.3 5.4 4M2.7 5.2Q3.5 4.5 4.3 5.2"/><circle cx="3.5" cy="6.2" r=".5" fill="#333"/></svg>
<svg class="a" style="left:626px;top:396.5px" width="9" height="8" viewBox="0 0 9 8" fill="none" stroke="#333" stroke-width=".6"><path d="M.5 2.8h1.8L4.5.8v6.4L2.3 5.2H.5z"/><path d="M5.8 2.5q.9 1.5 0 3M7 1.5q1.6 2.5 0 5"/></svg>
<svg class="a" style="left:636.5px;top:396px" width="12" height="9" viewBox="0 0 12 9"><rect x=".5" y="3" width="10.5" height="5.5" rx=".8" fill="#3c9a3c"/><rect x="11" y="4.6" width=".8" height="2.2" fill="#3c9a3c"/><path d="M5 .5L4 3.8h1.8L5.2 7" stroke="#1a3a1a" stroke-width=".8" fill="none"/></svg>
<div class="T" style="left:659.50px;top:395.29px;font-size:5.80px;font-weight:400;color:#222;transform:scaleX(0.9308);transform-origin:0 0;">10:08 am</div>
<div class="T" style="left:653.80px;top:401.89px;font-size:5.80px;font-weight:400;color:#222;transform:scaleX(0.9753);transform-origin:0 0;">08/04/2026</div>
<svg class="a" style="left:687px;top:396px" width="8" height="9" viewBox="0 0 8 9" fill="none" stroke="#333" stroke-width=".7"><path d="M1 7.5h6L6 6V3.5Q6 1 4 1T2 3.5V6z"/><path d="M3 8.2q1 .8 2 0"/><path d="M3.5 3.5h1.5L3.5 5.5H5"/></svg>
</body></html>
